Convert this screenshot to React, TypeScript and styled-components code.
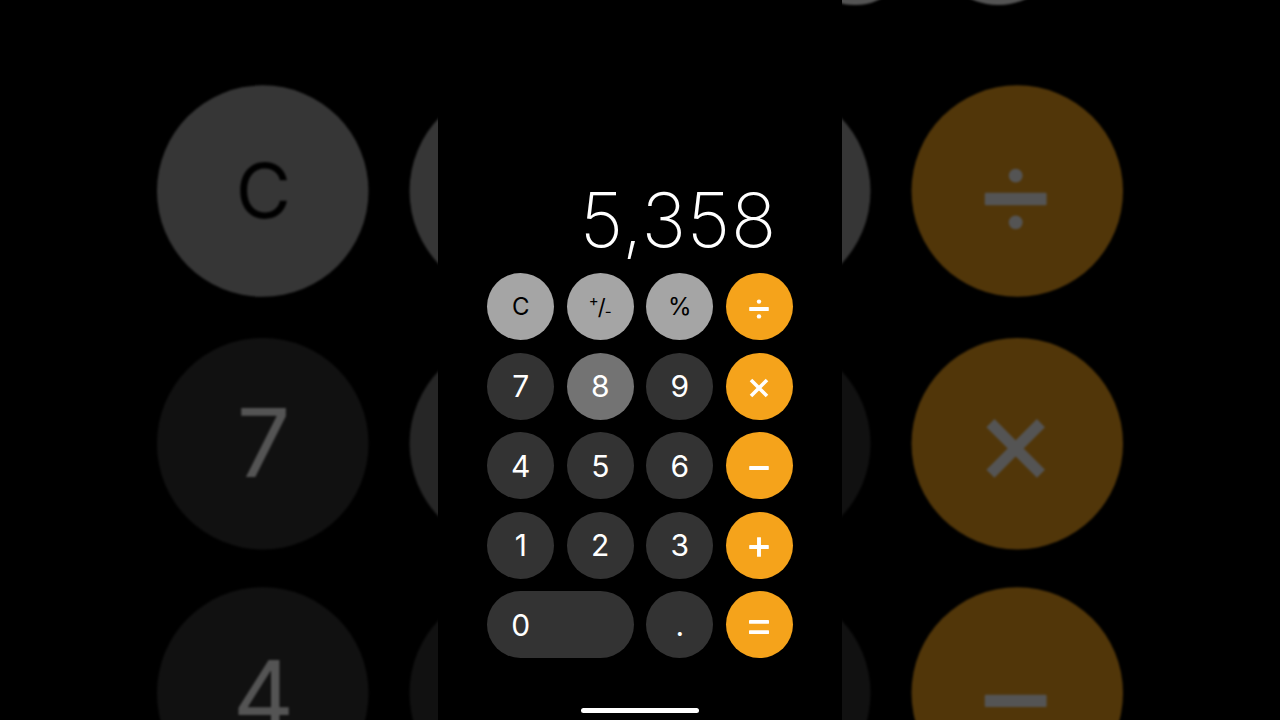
import React from "react";
import styled, { createGlobalStyle } from "styled-components";

const Global = createGlobalStyle`
  html, body { margin: 0; padding: 0; background: #000; }
  #root { width: 1280px; height: 720px; }
  * { box-sizing: border-box; }
`;

const Stage = styled.div`
  position: relative;
  width: 1280px;
  height: 720px;
  overflow: hidden;
  background: #000;
  display: flex;
  justify-content: center;
  font-family: Inter, "Noto Sans", "Liberation Sans", sans-serif;
`;

const Backdrop = styled.div`
  position: absolute;
  inset: 0;
  display: flex;
  justify-content: center;
  align-items: center;
  filter: brightness(0.33) blur(1px);
  pointer-events: none;
`;

const Zoomed = styled.div`
  transform: scale(3.157);
  transform-origin: 50% 50%;
`;

const Screen = styled.div`
  position: relative;
  z-index: 1;
  width: 404px;
  height: 720px;
  flex-shrink: 0;
  background: #000;
  display: flex;
  flex-direction: column;
`;

const Display = styled.div`
  flex: 1;
  display: flex;
  align-items: flex-end;
  justify-content: flex-end;
  padding: 0 65px 16px 0;
  color: #fff;
  font-size: 75px;
  font-weight: 200;
  line-height: 1;
  letter-spacing: 0.8px;
`;

const Keypad = styled.div`
  align-self: center;
  display: grid;
  grid-template-columns: repeat(4, 67px);
  grid-auto-rows: 67px;
  gap: 12.5px;
`;

type Tone = "light" | "dark" | "pressed" | "op";

const toneBg: Record<Tone, string> = {
  light: "#a5a5a5",
  dark: "#333333",
  pressed: "#737373",
  op: "#f5a31b",
};

const Key = styled.div<{ $tone: Tone; $wide?: boolean }>`
  grid-column: ${(p) => (p.$wide ? "span 2" : "auto")};
  border-radius: 34px;
  background: ${(p) => toneBg[p.$tone]};
  color: ${(p) => (p.$tone === "light" ? "#000" : "#fff")};
  display: flex;
  align-items: center;
  justify-content: ${(p) => (p.$wide ? "flex-start" : "center")};
  font-size: ${(p) => (p.$tone === "light" ? "24px" : "30px")};
  font-weight: 400;
  line-height: 1;
`;

const Label = styled.span<{ $wide?: boolean }>`
  display: flex;
  align-items: center;
  justify-content: center;
  width: ${(p) => (p.$wide ? "67px" : "auto")};
`;

const Sup = styled.span`
  font-size: 15px;
  align-self: flex-start;
  margin-top: -3px;
`;

const Sub = styled.span`
  font-size: 15px;
  align-self: flex-end;
  margin-bottom: -1px;
`;

const Slash = styled.span`
  font-size: 22px;
  margin: 0 -1px;
`;

const Icon = styled.svg`
  display: block;
  width: 24px;
  height: 24px;
  margin-top: 4px;
`;

const HomeArea = styled.div`
  height: 62px;
  padding-top: 50px;
  display: flex;
  justify-content: center;
`;

const HomeBar = styled.div`
  width: 118px;
  height: 5px;
  border-radius: 3px;
  background: #fff;
`;

const OpIcon = ({ kind }: { kind: string }) => {
  const fill = "#fff";
  switch (kind) {
    case "div":
      return (
        <Icon viewBox="0 0 24 24">
          <rect x="2.2" y="10.05" width="19.6" height="3.9" rx="0.4" fill={fill} />
          <circle cx="12" cy="4.6" r="2.2" fill={fill} />
          <circle cx="12" cy="19.4" r="2.2" fill={fill} />
        </Icon>
      );
    case "mul":
      return (
        <Icon viewBox="0 0 24 24">
          <path d="M4 4 L20 20 M20 4 L4 20" stroke={fill} strokeWidth="3.6" />
        </Icon>
      );
    case "sub":
      return (
        <Icon viewBox="0 0 24 24">
          <rect x="2.2" y="10.05" width="19.6" height="3.9" rx="0.4" fill={fill} />
        </Icon>
      );
    case "add":
      return (
        <Icon viewBox="0 0 24 24">
          <rect x="2.2" y="10.05" width="19.6" height="3.9" rx="0.4" fill={fill} />
          <rect x="10.05" y="2.2" width="3.9" height="19.6" rx="0.4" fill={fill} />
        </Icon>
      );
    default:
      return (
        <Icon viewBox="0 0 24 24">
          <rect x="2" y="5" width="20" height="3.7" rx="0.4" fill={fill} />
          <rect x="2" y="15.3" width="20" height="3.7" rx="0.4" fill={fill} />
        </Icon>
      );
  }
};

type KeyDef = { label?: React.ReactNode; op?: string; tone: Tone; wide?: boolean };

const keys: KeyDef[] = [
  { label: "C", tone: "light" },
  {
    label: (
      <>
        <Sup>+</Sup>
        <Slash>/</Slash>
        <Sub>-</Sub>
      </>
    ),
    tone: "light",
  },
  { label: "%", tone: "light" },
  { op: "div", tone: "op" },
  { label: "7", tone: "dark" },
  { label: "8", tone: "pressed" },
  { label: "9", tone: "dark" },
  { op: "mul", tone: "op" },
  { label: "4", tone: "dark" },
  { label: "5", tone: "dark" },
  { label: "6", tone: "dark" },
  { op: "sub", tone: "op" },
  { label: "1", tone: "dark" },
  { label: "2", tone: "dark" },
  { label: "3", tone: "dark" },
  { op: "add", tone: "op" },
  { label: "0", tone: "dark", wide: true },
  { label: ".", tone: "dark" },
  { op: "eq", tone: "op" },
];

const Calculator = () => (
  <Screen>
    <Display>5,358</Display>
    <Keypad>
      {keys.map((k, i) => (
        <Key key={i} $tone={k.tone} $wide={k.wide}>
          {k.op ? <OpIcon kind={k.op} /> : <Label $wide={k.wide}>{k.label}</Label>}
        </Key>
      ))}
    </Keypad>
    <HomeArea>
      <HomeBar />
    </HomeArea>
  </Screen>
);

export default function App() {
  return (
    <>
      <Global />
      <Stage>
        <Backdrop>
          <Zoomed>
            <Calculator />
          </Zoomed>
        </Backdrop>
        <Calculator />
      </Stage>
    </>
  );
}
